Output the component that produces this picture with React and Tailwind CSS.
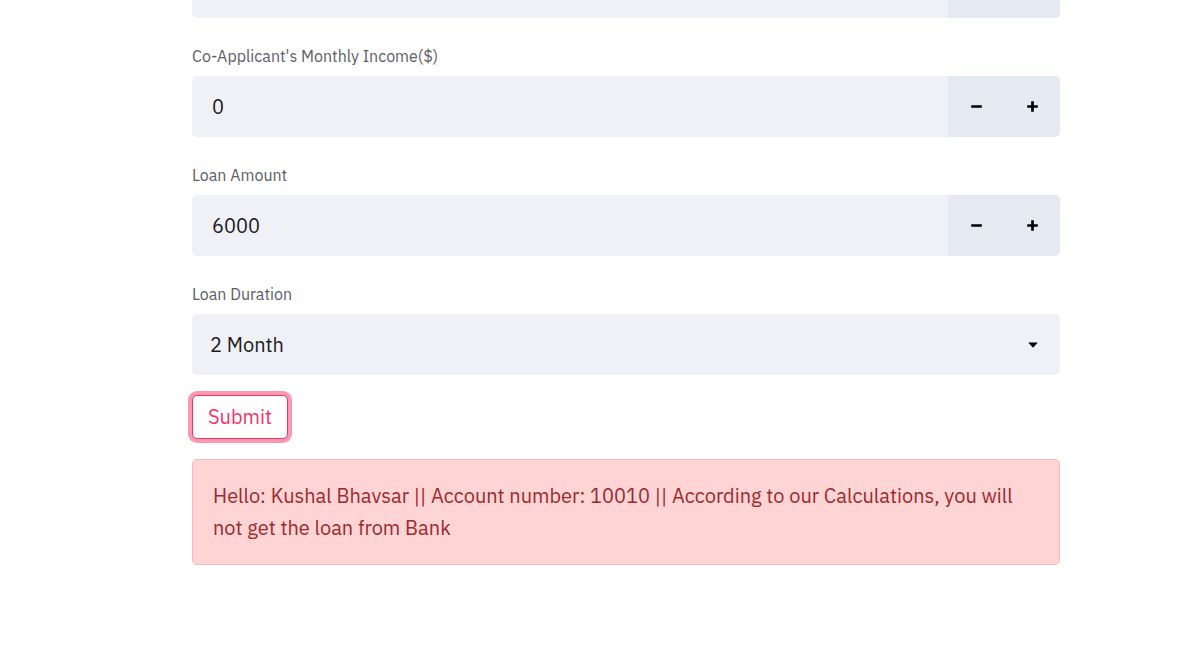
import { useState } from "react";

function StepIcon({ plus }) {
  return (
    <svg width="11" height="11" viewBox="0 0 11 11" fill="none" stroke="#000" strokeWidth="2.7" aria-hidden="true">
      <path d="M.2 5.5h10.600" />
      {plus && <path d="M5.500 .2v10.600" />}
    </svg>
  );
}

function NumberField({ id, label, hiddenLabel, initial, step = 1 }) {
  const [value, setValue] = useState(initial);
  const move = (delta) => setValue(String(Number(value) + delta));
  return (
    <div className="flex flex-col gap-2">
      {!hiddenLabel && (
        <label htmlFor={id} className="text-base leading-6 text-[#5c5d65]">
          {label}
        </label>
      )}
      <div className="flex h-[61px] overflow-hidden rounded-[5px] bg-[#f0f1f6]">
        <input
          id={id}
          aria-label={hiddenLabel ? label : undefined}
          type="text"
          inputMode="numeric"
          value={value}
          onChange={(e) => setValue(e.target.value)}
          className="min-w-0 flex-1 bg-transparent px-5 text-xl text-[#1c1c20] outline-none"
        />
        <div className="flex w-28 bg-[#e5e9f1]">
          <button type="button" aria-label="Decrease" onClick={() => move(-step)} className="flex flex-1 items-center justify-center">
            <StepIcon />
          </button>
          <button type="button" aria-label="Increase" onClick={() => move(step)} className="flex flex-1 items-center justify-center">
            <StepIcon plus />
          </button>
        </div>
      </div>
    </div>
  );
}

export default function App() {
  return (
    <main className="pr-4 pl-[74px] font-['IBM_Plex_Sans','Noto_Sans',sans-serif]">
      <form onSubmit={(e) => e.preventDefault()} className="mx-auto -mt-[43px] flex max-w-[868px] flex-col gap-[26px]">
        <NumberField id="applicant-income" label="Applicant's Monthly Income($)" hiddenLabel initial="0" />
        <NumberField id="co-income" label="Co-Applicant's Monthly Income($)" initial="0" />
        <NumberField id="amount" label="Loan Amount" initial="6000" />
        <div className="flex flex-col gap-5">
          <div className="flex flex-col gap-2">
            <label htmlFor="duration" className="text-base leading-6 text-[#5c5d65]">
              Loan Duration
            </label>
            <div className="grid items-center">
              <select
                id="duration"
                defaultValue="2"
                className="col-start-1 row-start-1 h-[61px] w-full appearance-none rounded-[5px] bg-[#f0f1f6] px-[18px] text-xl text-[#1c1c20] outline-none"
              >
                <option value="2">2 Month</option>
                <option value="6">6 Month</option>
                <option value="8">8 Month</option>
                <option value="12">1 Year</option>
                <option value="16">16 Month</option>
              </select>
              <svg width="10" height="6" viewBox="0 0 10 6" className="pointer-events-none col-start-1 row-start-1 mr-[22px] justify-self-end" aria-hidden="true">
                <path d="M.7 0.5h8.600q.5 0 .1.500L5.400 5.200q-.4.400-.8 0L.6 1q-.4-.5.1-.5z" fill="#000" />
              </svg>
            </div>
          </div>
          <button
            type="submit"
            className="h-11 self-start rounded-[5px] border border-[#f63366] bg-white px-[15px] text-xl text-[#f63366] ring-4 ring-[#fb99b3]"
          >
            Submit
          </button>
          <div role="alert" className="rounded-[5px] border border-[#ffb8bc] bg-[#ffd4d5] p-5 text-xl leading-8 text-[#9d292d]">
            Hello: Kushal Bhavsar || Account number: 10010 || According to our Calculations, you will not get the loan from Bank
          </div>
        </div>
      </form>
    </main>
  );
}
